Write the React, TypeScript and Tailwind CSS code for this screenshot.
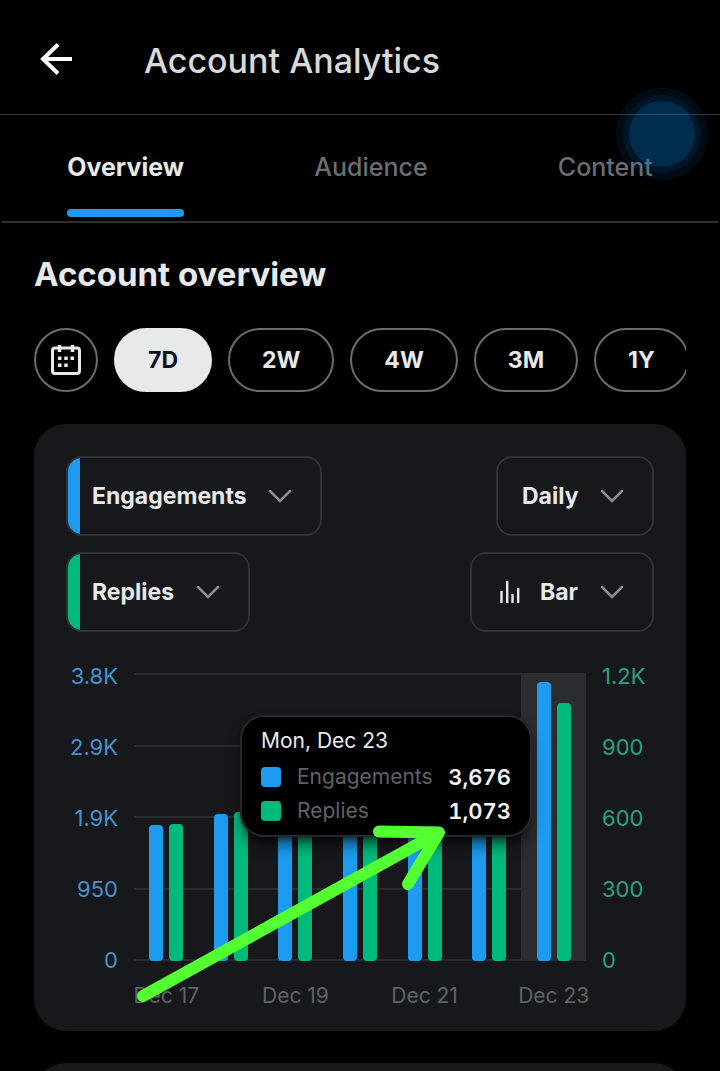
import { useState } from 'react';
import type { ReactNode } from 'react';

interface DayPoint {
  label: string;
  engagements: number;
  replies: number;
}

interface PickerProps {
  label: string;
  options: string[];
  className?: string;
  selectClassName?: string;
  children?: ReactNode;
}

const ENGAGEMENTS_MAX = 3800;
const REPLIES_MAX = 1200;

const TABS = ['Overview', 'Audience', 'Content'];
const RANGES = ['7D', '2W', '4W', '3M', '1Y'];

const DAYS: DayPoint[] = [
  { label: 'Dec 17', engagements: 1800, replies: 571 },
  { label: 'Dec 18', engagements: 1945, replies: 620 },
  { label: 'Dec 19', engagements: 2150, replies: 680 },
  { label: 'Dec 20', engagements: 2300, replies: 710 },
  { label: 'Dec 21', engagements: 2250, replies: 700 },
  { label: 'Dec 22', engagements: 2400, replies: 740 },
  { label: 'Dec 23', engagements: 3676, replies: 1073 },
];

const LEFT_TICKS = ['3.8K', '2.9K', '1.9K', '950', '0'];
const RIGHT_TICKS = ['1.2K', '900', '600', '300', '0'];

function CalendarIcon() {
  return (
    <svg viewBox="0 0 30 30" className="size-[30px]" fill="none" aria-hidden="true">
      <rect x="1.5" y="3" width="27" height="25.500" rx="2.500" stroke="#e7e9ea" strokeWidth="3" />
      <path d="M8.500 0v7M21.500 0v7" stroke="#e7e9ea" strokeWidth="3.500" />
      <path
        d="M7 11.500h3.500v3.500H7zM13.250 11.500h3.500v3.500h-3.500zM19.500 11.500h3.500v3.500h-3.500zM7 18.500h3.500v3.500H7zM13.250 18.500h3.500v3.500h-3.500z"
        fill="#e7e9ea"
      />
    </svg>
  );
}

function Picker({ label, options, className = '', selectClassName = '', children }: PickerProps) {
  return (
    <div className={`relative flex h-20 items-center overflow-hidden rounded-2xl border-2 border-[#2f3236] ${className}`}>
      {children}
      <select
        aria-label={label}
        className={`h-full min-w-0 flex-1 appearance-none bg-transparent text-[23px] font-bold text-[#e7e9ea] outline-none ${selectClassName}`}
      >
        {options.map((option) => (
          <option key={option}>{option}</option>
        ))}
      </select>
      <svg
        viewBox="0 0 24 14"
        className="pointer-events-none absolute right-7 h-[14px] w-6"
        fill="none"
        stroke="#8b8d91"
        strokeWidth="2.5"
        strokeLinecap="round"
        aria-hidden="true"
      >
        <path d="M2 2 12 12 22 2" />
      </svg>
    </div>
  );
}

function Tooltip({ day }: { day: DayPoint }) {
  return (
    <div className="absolute top-[42px] right-[54px] w-[292px] rounded-3xl border-2 border-[#26282c] bg-black px-[19px] py-[7px] text-[21px] leading-[34px] shadow-lg shadow-black/60">
      <div className="mb-[2px] text-[#e7e9ea]">Mon, {day.label}</div>
      <div className="flex items-center">
        <span className="mr-4 size-5 rounded bg-[#1d9bf0]" />
        <span className="flex-1 text-[#5f6266]">Engagements</span>
        <span className="text-[22px] font-semibold text-[#f2f3f4] tabular-nums">
          {day.engagements.toLocaleString('en-US')}
        </span>
      </div>
      <div className="flex items-center">
        <span className="mr-4 size-5 rounded bg-[#00ba7c]" />
        <span className="flex-1 text-[#5f6266]">Replies</span>
        <span className="text-[22px] font-semibold text-[#f2f3f4] tabular-nums">
          {day.replies.toLocaleString('en-US')}
        </span>
      </div>
    </div>
  );
}

function Chart() {
  const active = DAYS.length - 1;

  return (
    <div className="mt-[41px] grid grid-cols-[52px_1fr_52px] gap-x-4 text-[22px] leading-6">
      <div className="-mt-[9px] -mb-[11px] flex flex-col justify-between text-right text-[#4593cf]">
        {LEFT_TICKS.map((tick) => (
          <span key={tick}>{tick}</span>
        ))}
      </div>

      <div className="relative grid h-[288px]">
        <div className="col-start-1 row-start-1 flex flex-col justify-between">
          {LEFT_TICKS.map((tick) => (
            <span key={tick} className="h-[2px] bg-[#292b2f]" />
          ))}
        </div>
        <div className="col-start-1 row-start-1 grid grid-cols-7">
          {DAYS.map((day, index) => (
            <div
              key={day.label}
              className={`flex h-[288px] items-end justify-center gap-[6px] ${index === active ? 'bg-[#2b2c2f]' : ''}`}
            >
              <span
                className="w-[14px] rounded bg-[#1d9bf0]"
                style={{ height: `${(day.engagements / ENGAGEMENTS_MAX) * 100}%` }}
              />
              <span
                className="w-[14px] rounded bg-[#00ba7c]"
                style={{ height: `${(day.replies / REPLIES_MAX) * 100}%` }}
              />
            </div>
          ))}
        </div>

        <Tooltip day={DAYS[active]} />

        {/* Hand-drawn arrow pointing at the tooltip */}
        <svg
          viewBox="0 0 320 190"
          className="pointer-events-none absolute top-[149px] left-[-4px] h-[190px] w-80"
          fill="none"
          stroke="#54ff32"
          strokeWidth="12"
          strokeLinecap="round"
          strokeLinejoin="round"
          aria-hidden="true"
        >
          <path d="M13 174 308 11M249 9.500 309 10.500 278 62" />
        </svg>
      </div>

      <div className="-mt-[9px] -mb-[11px] flex flex-col justify-between text-[#2ba27c]">
        {RIGHT_TICKS.map((tick) => (
          <span key={tick}>{tick}</span>
        ))}
      </div>

      {/* Every second day gets a label; z-index keeps them below the arrow */}
      <div className="col-start-2 -z-10 mt-[23px] grid grid-cols-7 text-[21px] text-[#5f6266]">
        {DAYS.map((day, index) => (
          <span key={day.label} className="flex justify-center whitespace-nowrap">
            {index % 2 === 0 ? day.label : ''}
          </span>
        ))}
      </div>
    </div>
  );
}

export default function App() {
  const [tab, setTab] = useState('Overview');
  const [range, setRange] = useState('7D');

  return (
    <div className="relative h-screen overflow-hidden bg-black font-['Inter',sans-serif] text-[#e7e9ea]">
      <header className="flex h-[115px] items-center border-b border-[#343639] pt-1 pl-10">
        <button type="button" aria-label="Back" className="mr-[72px]">
          <svg viewBox="0 0 32 32" className="size-8" fill="none" stroke="#fff" strokeWidth="4" aria-hidden="true">
            <path d="M32 16H3M18 1.500 3 16l15 14.500" />
          </svg>
        </button>
        <h1 className="pt-1 text-[34px] leading-10 font-medium text-[#d9d9d9]">Account Analytics</h1>
      </header>

      <nav className="mx-[2px] flex h-[108px] justify-around border-b-2 border-[#2f3033]">
        {TABS.map((name) => (
          <button
            key={name}
            type="button"
            onClick={() => setTab(name)}
            className={`flex flex-col justify-between pt-9 pb-1 text-[25px] leading-8 ${
              tab === name ? 'font-bold text-[#e7e9ea]' : 'font-medium text-[#6b6e73]'
            }`}
          >
            {name}
            <span className={`h-2 w-full rounded-full ${tab === name ? 'bg-[#1d9bf0]' : ''}`} />
          </button>
        ))}
      </nav>

      {/* Touch indicator */}
      <div className="pointer-events-none absolute top-[88px] right-3 flex size-[92px] items-center justify-center rounded-full bg-[#0070c8]/10">
        <div className="flex size-[78px] items-center justify-center rounded-full bg-[#0070c8]/10">
          <div className="size-[66px] rounded-full bg-[#0070c8]/25" />
        </div>
      </div>

      <main className="relative z-0 px-[34px] pt-[31px]">
        <h2 className="text-[33px] leading-10 font-bold">Account overview</h2>

        <div className="mt-[34px] flex gap-4 overflow-hidden">
          <button
            type="button"
            aria-label="Pick dates"
            className="flex size-16 shrink-0 items-center justify-center rounded-full border-2 border-[#6a6c70]"
          >
            <CalendarIcon />
          </button>
          {RANGES.map((name) => (
            <button
              key={name}
              type="button"
              onClick={() => setRange(name)}
              className={`h-16 shrink-0 rounded-full border-2 px-8 text-[23px] font-bold ${
                range === name ? 'border-[#e7e9ea] bg-[#e7e9ea] text-[#0f1114]' : 'border-[#6a6c70]'
              }`}
            >
              {name}
            </button>
          ))}
        </div>

        <section className="relative z-0 mt-8 rounded-[32px] bg-[#17181c] px-8 pt-8 pb-[23px]">
          <div className="flex justify-between">
            <Picker
              label="First metric"
              options={['Engagements', 'Impressions', 'Likes']}
              className="w-64"
              selectClassName="pl-3"
            >
              <span className="h-full w-3 bg-[#1d9bf0]" />
            </Picker>
            <Picker label="Interval" options={['Daily', 'Weekly']} className="w-[158px]" selectClassName="pl-6" />
          </div>
          <div className="mt-4 flex justify-between">
            <Picker label="Second metric" options={['Replies', 'Reposts']} className="w-[184px]" selectClassName="pl-3">
              <span className="h-full w-3 bg-[#00ba7c]" />
            </Picker>
            <Picker label="Chart type" options={['Bar', 'Line']} className="w-[184px]" selectClassName="pl-5">
              <svg
                viewBox="0 0 20 22"
                className="ml-7 h-[22px] w-5"
                fill="none"
                stroke="#e7e9ea"
                strokeWidth="2.400"
                aria-hidden="true"
              >
                <path d="M1.500 10v12M7.200 0v22M12.500 13v9M18.200 7v15" />
              </svg>
            </Picker>
          </div>
          <Chart />
        </section>

        <section className="mt-8 h-40 rounded-[32px] bg-[#17181c]" />
      </main>
    </div>
  );
}
